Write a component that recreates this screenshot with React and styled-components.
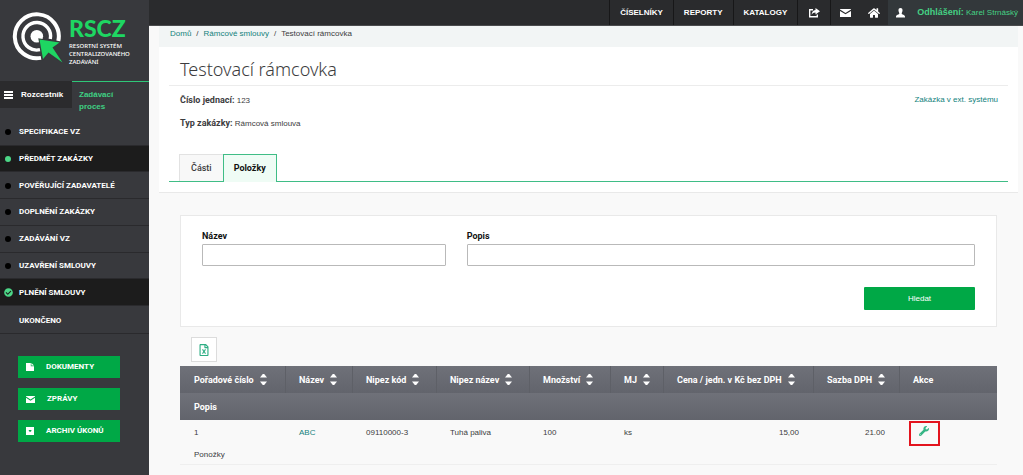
import styled, { createGlobalStyle, css } from "styled-components";
import { FaCheckCircle, FaHome, FaRegFileExcel, FaWrench } from "react-icons/fa";

const GlobalStyle = createGlobalStyle`
  *, *::before, *::after {
    box-sizing: border-box;
  }
  body {
    margin: 0;
    background: #f9f9f9;
    color: #3c3c3e;
    font-family: "Liberation Sans", Arial, sans-serif;
    font-size: 8px;
    line-height: 12px;
  }
  a {
    color: inherit;
    text-decoration: none;
  }
  ul, ol {
    list-style: none;
    margin: 0;
    padding: 0;
  }
  b, label, th {
    font-family: Roboto, "Liberation Sans", sans-serif;
    font-size: 9px;
    font-weight: 700;
  }
`;

const Page = styled.div`
  display: grid;
  grid-template-columns: 149px 1fr;
  min-height: 100vh;
`;

const Sidebar = styled.aside`
  background: #38393d;
  color: #fff;
  font-family: Roboto, sans-serif;
  font-weight: 700;
`;

const LogoLink = styled.a`
  display: flex;
  align-items: flex-start;
  gap: 6px;
  height: 81px;
  padding: 12px 0 0 12px;
  svg {
    flex: none;
  }
`;

const LogoText = styled.span`
  padding-top: 2px;
  font-family: "Noto Sans", sans-serif;
  font-size: 6px;
  font-weight: 500;
  line-height: 8px;
  white-space: nowrap;
  strong {
    display: block;
    color: #1ed662;
    font-family: Lato, sans-serif;
    font-size: 23px;
    font-weight: 900;
    line-height: 28px;
  }
`;

const SideTabs = styled.div`
  display: grid;
  grid-template-columns: 72px 1fr;
  align-items: start;
  height: 38px;
  font-family: "Liberation Sans", sans-serif;
`;

const SideTab = styled.a`
  display: flex;
  align-items: center;
  gap: 8px;
  height: 27px;
  padding-left: 4px;
  background: #2b2b2d;
  ${({ $active }) =>
    $active &&
    css`
      height: 38px;
      padding: 0 30px 0 7px;
      background: none;
      border-top: 1px solid #2fc779;
      color: #3fcf83;
    `}
`;

const Steps = styled.ul`
  display: grid;
  grid-template-rows: repeat(7, 1fr) 28px;
  min-height: 215px;
`;

const Step = styled.li`
  display: flex;
  align-items: center;
  padding-top: 1px;
  border-bottom: 1px solid #2a2a2d;
  background: ${({ $dark }) => ($dark ? "#1c1c1c" : "none")};
  &:last-child {
    padding-top: 4px;
  }
  a {
    display: flex;
    align-items: center;
  }
`;

const StepMark = styled.span`
  display: flex;
  justify-content: center;
  width: 16px;
  margin-right: 3px;
  color: #4cd787;
`;

const Dot = styled.i`
  width: 6px;
  height: 6px;
  border-radius: 50%;
  background: ${({ $color }) => $color};
`;

const SideButtons = styled.div`
  display: grid;
  gap: 10px;
  padding: 22px 29px 0 18px;
`;

const SideButton = styled.button`
  display: flex;
  align-items: center;
  gap: 12px;
  height: 22px;
  padding: 0 8px;
  border: 0;
  background: #00a846;
  color: #fff;
  font: inherit;
`;

const TopBar = styled.header`
  display: flex;
  justify-content: flex-end;
  height: 26px;
  background: #2a2b2d;
  border-bottom: 1px solid #4a4b4d;
  color: #fff;
`;

const NavLink = styled.a`
  display: flex;
  align-items: center;
  justify-content: center;
  padding: 0 ${({ $pad = 10 }) => $pad}px;
  border-left: ${({ $plain }) => ($plain ? "0" : "1px solid #171718")};
  font-weight: 700;
`;

const User = styled.a`
  display: flex;
  align-items: center;
  gap: 12px;
  padding: 0 5px 0 8px;
  background: #33383b;
  color: #45d184;
  b {
    font-family: "Liberation Sans", sans-serif;
  }
  svg {
    color: #fff;
  }
`;

const Content = styled.main`
  padding: 0 5px 0 10px;
`;

const Breadcrumb = styled.ol`
  display: flex;
  height: 21px;
  padding: 2px 11px;
  background: #f2f5f5;
  li + li::before {
    content: "/";
    padding: 0 5px;
    color: #3c3c3e;
  }
`;

const TealLink = styled.a`
  color: #12827c;
`;

const Panel = styled.section`
  padding: 0 10px 10px;
  background: #fff;
  border-bottom: 1px solid #e9e9e9;
`;

const Title = styled.h1`
  height: 39px;
  margin: 0;
  padding: 9px 11px 0;
  border-bottom: 1px solid #ececec;
  font-family: "Noto Sans", "Open Sans", sans-serif;
  font-size: 18px;
  font-weight: 300;
  line-height: 26px;
`;

const Facts = styled.div`
  display: grid;
  grid-template-columns: 1fr auto;
  row-gap: 10px;
  padding: 8px 10px 24px 11px;
`;

const Tabs = styled.nav`
  display: flex;
  padding-left: 10px;
  border-bottom: 1px solid #3fbd86;
`;

const Tab = styled.a`
  height: 27px;
  padding: 7px 11px 0;
  background: #f8f8f8;
  border: 1px solid #e2e2e2;
  border-width: 1px 0 0 1px;
  font-family: Roboto, sans-serif;
  font-size: 9px;
  font-weight: 500;
  ${({ $active }) =>
    $active &&
    css`
      height: 28px;
      margin-bottom: -1px;
      padding: 7px 10px 0;
      background: #effcf5;
      border-color: #3fbd86;
      border-width: 1px 1px 0;
      color: #111;
      font-weight: 700;
    `}
`;

const Listing = styled.section`
  padding: 22px 21px 0;
`;

const SearchForm = styled.form`
  display: grid;
  grid-template-columns: repeat(12, 1fr);
  column-gap: 21px;
  padding: 14px 21px 16px;
  background: #fff;
  border: 1px solid #e9e9e9;
`;

const Field = styled.div`
  grid-column: span ${({ $span }) => $span};
  label {
    display: block;
    color: #111;
  }
  input {
    display: block;
    width: 100%;
    height: 22px;
    margin-top: 2px;
    padding: 0 6px;
    border: 1px solid #b9b9b9;
    border-radius: 1px;
    font: inherit;
  }
`;

const SearchButton = styled.button`
  grid-column: 1 / -1;
  justify-self: end;
  width: 111px;
  height: 23px;
  margin-top: 21px;
  border: 0;
  border-radius: 1px;
  background: #00a846;
  color: #fff;
  font: inherit;
`;

const ExportButton = styled.button`
  display: flex;
  align-items: center;
  justify-content: center;
  width: 26px;
  height: 25px;
  margin: 10px 0 4px 11px;
  border: 1px solid #dcdcdc;
  background: #fff;
  color: #2eae84;
`;

const Table = styled.table`
  width: 100%;
  border-collapse: separate;
  border-spacing: 0;
  table-layout: fixed;
  border-bottom: 1px solid #efefef;
  th,
  td {
    padding: 0 14px;
    text-align: left;
    white-space: nowrap;
  }
  th {
    height: 27px;
    padding-right: 0;
    background: linear-gradient(#6f7179, #62646c);
    color: #fff;
  }
  th + th {
    padding-left: 13px;
    border-left: 1px solid #5e6067;
  }
  td {
    height: 18px;
  }
  tbody tr:first-child td {
    height: 26px;
  }
`;

const NumberCell = styled.td`
  && {
    text-align: right;
  }
`;

const SortButton = styled.button`
  display: inline-flex;
  align-items: center;
  gap: 6px;
  padding: 0;
  border: 0;
  background: none;
  color: inherit;
  font: inherit;
`;

const Tool = styled.a`
  position: relative;
  display: inline-block;
  padding-left: 6px;
  color: #35b585;
  svg {
    display: block;
  }
  &::after {
    content: "";
    position: absolute;
    top: -5px;
    left: -4px;
    width: 31px;
    height: 25px;
    border: 2px solid #e3141e;
  }
`;

const Logo = () => (
  <svg width="51" height="52" viewBox="0 0 51 52" fill="none" stroke="#fff">
    <path d="M29 45.900A22 22 0 1 1 46.300 29" strokeWidth="4" />
    <path d="M28 37.700A13.800 13.800 0 1 1 38.300 27" strokeWidth="3.400" />
    <circle cx="24.800" cy="24.300" r="6.300" fill="#fff" stroke="none" />
    <path
      d="M27.500 27.500L47.500 30.500 40.500 35.500 50.500 50.500 36.500 40.500 31 47z"
      fill="#1ed662"
      stroke="#38393d"
      strokeWidth="2"
      paintOrder="stroke"
    />
  </svg>
);

const MenuIcon = () => (
  <svg width="9" height="8" viewBox="0 0 9 8" fill="#fff">
    <path d="M0 0h9v2H0zM0 3h9v2H0zM0 6h9v2H0z" />
  </svg>
);

const ShareIcon = () => (
  <svg width="12" height="10" viewBox="0 0 12 10" fill="none">
    <path d="M5 1.700H1.700v7h7.600V6.500" stroke="#fff" strokeWidth="1.400" />
    <path d="M7.500 0L12 3.200 7.500 6.400V4.500C5.600 4.500 4.600 5.200 3.600 6.800 3.800 4 5 2.100 7.500 1.900z" fill="#fff" />
  </svg>
);

const MailIcon = ({ width = 11 }) => (
  <svg width={width} height={width > 9 ? 8 : 7} viewBox="0 0 11 8" fill="#fff" preserveAspectRatio="none">
    <path d="M0 0h11v.600L5.500 4 0 .600z" />
    <path d="M0 1.900l5.500 3.400L11 1.900V8H0z" />
  </svg>
);

const UserIcon = () => (
  <svg width="9" height="10" viewBox="0 0 9 10" fill="currentColor">
    <path d="M4.500 0C6.100 0 6.700 1.200 6.500 2.800 6.400 4 5.700 4.800 5.700 5.600c0 1.300 3.300 1.200 3.300 3V9.500H0V8.600c0-1.800 3.300-1.700 3.300-3C3.300 4.800 2.600 4 2.500 2.800 2.300 1.200 2.900 0 4.500 0z" />
  </svg>
);

const FileIcon = () => (
  <svg width="8" height="8" viewBox="0 0 8 8" fill="#fff">
    <path d="M0 0h4.800v3.200H8V8H0z" />
    <path d="M5.400 0L8 2.600H5.400z" />
  </svg>
);

const ArchiveIcon = () => (
  <svg width="8" height="8" viewBox="0 0 8 8" fill="#fff" fillRule="evenodd">
    <path d="M0 0h8v8H0zM2.800 3h2.600v1L4.100 5 2.800 4z" />
  </svg>
);

const SortIcon = () => (
  <svg width="7" height="11" viewBox="0 0 7 11" fill="#fff">
    <path d="M0 3.500L2.800 0h1.400L7 3.500zM0 7.500h7L4.200 11H2.800z" />
  </svg>
);

const steps = [
  { name: "SPECIFIKACE VZ", color: "#000" },
  { name: "PŘEDMĚT ZAKÁZKY", color: "#4cd787", dark: true },
  { name: "POVĚŘUJÍCÍ ZADAVATELÉ", color: "#000" },
  { name: "DOPLNĚNÍ ZAKÁZKY", color: "#000" },
  { name: "ZADÁVÁNÍ VZ", color: "#000" },
  { name: "UZAVŘENÍ SMLOUVY", color: "#000" },
  { name: "PLNĚNÍ SMLOUVY", check: true, dark: true },
  { name: "UKONČENO" },
];

const columns = [
  { name: "Pořadové číslo", width: 105 },
  { name: "Název", width: 67 },
  { name: "Nipez kód", width: 84 },
  { name: "Nipez název", width: 93 },
  { name: "Množství", width: 81 },
  { name: "MJ", width: 53 },
  { name: "Cena / jedn. v Kč bez DPH", width: 150 },
  { name: "Sazba DPH", width: 86 },
  { name: "Akce", width: 98, fixed: true },
];

const tableWidth = columns.reduce((sum, column) => sum + column.width, 0);

const App = () => {
  return (
    <>
      <GlobalStyle />
      <Page>
        <Sidebar>
          <LogoLink href="#">
            <Logo />
            <LogoText>
              <strong>RSCZ</strong>
              RESORTNÍ SYSTÉM
              <br />
              CENTRALIZOVANÉHO
              <br />
              ZADÁVÁNÍ
            </LogoText>
          </LogoLink>
          <SideTabs>
            <SideTab href="#">
              <MenuIcon />
              Rozcestník
            </SideTab>
            <SideTab href="#" $active>
              Zadávací proces
            </SideTab>
          </SideTabs>
          <Steps>
            {steps.map((step) => (
              <Step key={step.name} $dark={step.dark}>
                <a href="#">
                  <StepMark>
                    {step.check && <FaCheckCircle size={9} />}
                    {step.color && <Dot $color={step.color} />}
                  </StepMark>
                  {step.name}
                </a>
              </Step>
            ))}
          </Steps>
          <SideButtons>
            <SideButton>
              <FileIcon />
              DOKUMENTY
            </SideButton>
            <SideButton>
              <MailIcon width={9} />
              ZPRÁVY
            </SideButton>
            <SideButton>
              <ArchiveIcon />
              ARCHIV ÚKONŮ
            </SideButton>
          </SideButtons>
        </Sidebar>
        <div>
          <TopBar>
            <NavLink href="#">ČÍSELNÍKY</NavLink>
            <NavLink href="#">REPORTY</NavLink>
            <NavLink href="#">KATALOGY</NavLink>
            <NavLink href="#" aria-label="Sdílet">
              <ShareIcon />
            </NavLink>
            <NavLink href="#" aria-label="Zprávy" $pad={9}>
              <MailIcon />
            </NavLink>
            <NavLink href="#" aria-label="Domů" $pad={8} $plain>
              <FaHome size={12} />
            </NavLink>
            <User href="#">
              <UserIcon />
              <span>
                <b>Odhlášení:</b> Karel Strnáský
              </span>
            </User>
          </TopBar>
          <Content>
            <Breadcrumb>
              <li>
                <TealLink href="#">Domů</TealLink>
              </li>
              <li>
                <TealLink href="#">Rámcové smlouvy</TealLink>
              </li>
              <li>Testovací rámcovka</li>
            </Breadcrumb>
            <Panel>
              <Title>Testovací rámcovka</Title>
              <Facts>
                <span>
                  <b>Číslo jednací:</b> 123
                </span>
                <TealLink href="#">Zakázka v ext. systému</TealLink>
                <span>
                  <b>Typ zakázky:</b> Rámcová smlouva
                </span>
              </Facts>
              <Tabs>
                <Tab href="#">Části</Tab>
                <Tab href="#" $active>
                  Položky
                </Tab>
              </Tabs>
            </Panel>
            <Listing>
              <SearchForm>
                <Field $span={4}>
                  <label htmlFor="name">Název</label>
                  <input id="name" />
                </Field>
                <Field $span={8}>
                  <label htmlFor="description">Popis</label>
                  <input id="description" />
                </Field>
                <SearchButton type="button">Hledat</SearchButton>
              </SearchForm>
              <ExportButton aria-label="Export do Excelu">
                <FaRegFileExcel size={12} />
              </ExportButton>
              <Table>
                <colgroup>
                  {columns.map((column) => (
                    <col key={column.name} style={{ width: `${(column.width / tableWidth) * 100}%` }} />
                  ))}
                </colgroup>
                <thead>
                  <tr>
                    {columns.map((column) => (
                      <th key={column.name}>
                        {column.fixed ? (
                          column.name
                        ) : (
                          <SortButton>
                            {column.name}
                            <SortIcon />
                          </SortButton>
                        )}
                      </th>
                    ))}
                  </tr>
                  <tr>
                    <th colSpan={9}>Popis</th>
                  </tr>
                </thead>
                <tbody>
                  <tr>
                    <td>1</td>
                    <td>
                      <TealLink href="#">ABC</TealLink>
                    </td>
                    <td>09110000-3</td>
                    <td>Tuhá paliva</td>
                    <td>100</td>
                    <td>ks</td>
                    <NumberCell>15,00</NumberCell>
                    <NumberCell>21.00</NumberCell>
                    <td>
                      <Tool href="#" aria-label="Upravit">
                        <FaWrench size={10} />
                      </Tool>
                    </td>
                  </tr>
                  <tr>
                    <td colSpan={9}>Ponožky</td>
                  </tr>
                </tbody>
              </Table>
            </Listing>
          </Content>
        </div>
      </Page>
    </>
  );
};

export default App;
